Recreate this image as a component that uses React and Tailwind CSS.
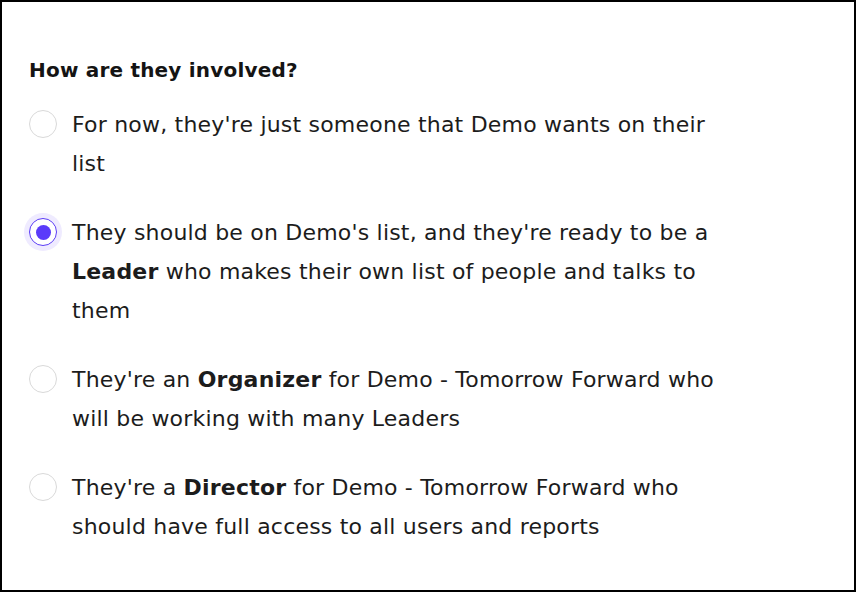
import React, { useState } from "react";

const options = [
  {
    id: "list",
    label: <>For now, they're just someone that Demo wants on their list</>,
  },
  {
    id: "leader",
    label: (
      <>
        They should be on Demo's list, and they're ready to be a{" "}
        <strong className="font-bold">Leader</strong> who makes their own list of people and
        talks to them
      </>
    ),
  },
  {
    id: "organizer",
    label: (
      <>
        They're an <strong className="font-bold">Organizer</strong> for Demo - Tomorrow Forward
        who will be working with many Leaders
      </>
    ),
  },
  {
    id: "director",
    label: (
      <>
        They're a <strong className="font-bold">Director</strong> for Demo - Tomorrow Forward who
        should have full access to all users and reports
      </>
    ),
  },
];

// Radio bulat, yang terpilih dapat halo ungu
function Radio({ checked }) {
  if (checked) {
    return (
      <span className="mt-[5px] flex h-[28px] w-[28px] shrink-0 items-center justify-center rounded-full border-[1.5px] border-[#5b3cf6] bg-white shadow-[0_0_0_5px_#efebff]">
        <span className="h-[15px] w-[15px] rounded-full bg-[#5a3bfa]" />
      </span>
    );
  }
  return (
    <span className="mt-[5px] h-[28px] w-[28px] shrink-0 rounded-full border border-[#d9d9d9] bg-white" />
  );
}

export default function App() {
  const [value, setValue] = useState("leader");

  return (
    <div
      className="box-border h-[592px] w-[856px] border-2 border-black bg-white pl-[27px] pt-[52px] text-[#1c1c1c]"
      style={{ fontFamily: '"DejaVu Sans", "Noto Sans", sans-serif' }}
    >
      <h2 className="text-[20px] font-bold leading-[32px] tracking-[0.2px] text-[#141414]">
        How are they involved?
      </h2>

      <div className="mt-[19px] flex flex-col gap-[30px]">
        {options.map((opt) => (
          <label
            key={opt.id}
            onClick={() => setValue(opt.id)}
            className="flex cursor-pointer items-start gap-[15px]"
          >
            <Radio checked={value === opt.id} />
            <span className="w-[660px] text-[22px] leading-[39px] tracking-[0.2px]">{opt.label}</span>
          </label>
        ))}
      </div>
    </div>
  );
}
